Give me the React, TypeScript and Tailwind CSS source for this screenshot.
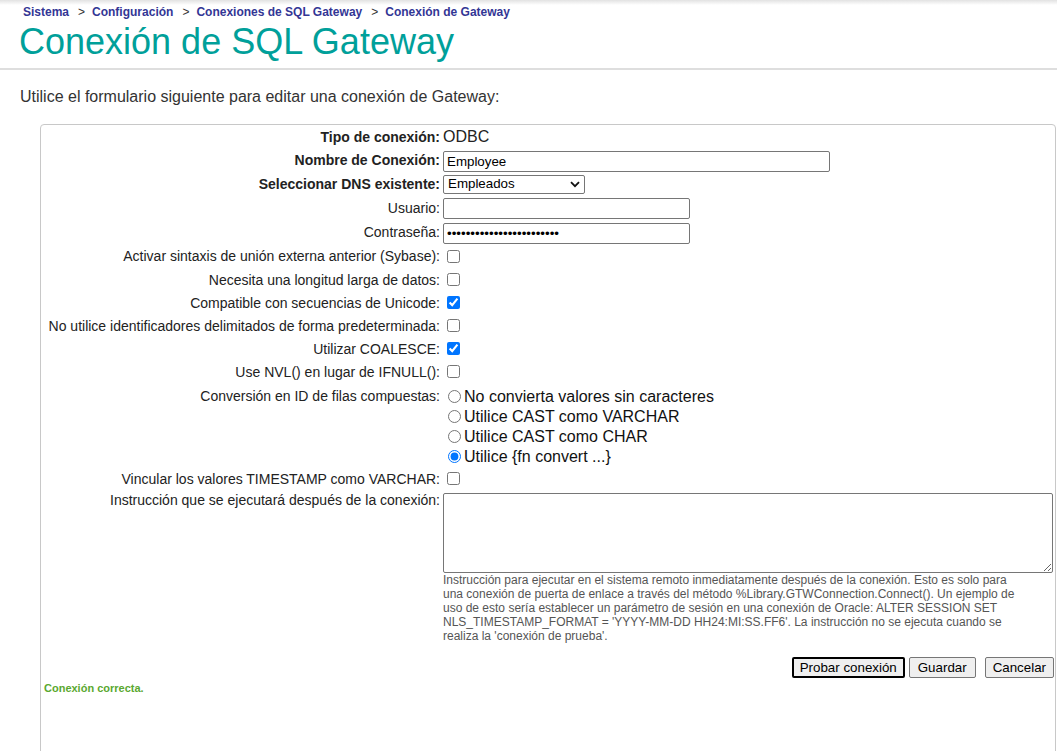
import React from "react";

const FONT = { fontFamily: '"Liberation Sans", Arial, sans-serif' };

function Row({
  label,
  bold,
  h,
  children,
  top,
  labelClass,
}: {
  label: string;
  bold?: boolean;
  h?: string;
  children: React.ReactNode;
  top?: boolean;
  labelClass?: string;
}) {
  return (
    <div className={`flex ${top ? "items-start" : "items-center"} ${h ?? ""}`}>
      <div
        className={`w-[399px] shrink-0 text-right text-[14px] leading-4 text-[#222] ${
          bold ? "font-bold" : ""
        } ${labelClass ?? ""}`}
      >
        {label}
      </div>
      <div className="pl-[3px] flex items-center">{children}</div>
    </div>
  );
}

function Check({ checked }: { checked?: boolean }) {
  return (
    <input
      type="checkbox"
      defaultChecked={checked}
      className="w-[13px] h-[13px] ml-[4px] my-0"
    />
  );
}

function Radio({ label, checked }: { label: string; checked?: boolean }) {
  return (
    <label className="flex items-center h-5 pt-[1px] text-[16px] text-[#111]">
      <input
        type="radio"
        name="conv"
        defaultChecked={checked}
        className="w-[13px] h-[13px] ml-[5px] mr-[3px] my-0"
      />
      <span>{label}</span>
    </label>
  );
}

const inputCls =
  "block h-[21px] border border-[#767676] rounded-[2px] px-[3px] text-[13.33px] text-black bg-white";

export default function App() {
  return (
    <div className="h-[751px] w-[1057px] overflow-hidden bg-white" style={FONT}>
      {/* header */}
      <div className="h-[5px] bg-gradient-to-b from-[#e2e2e2] to-white" />
      <div className="pl-[23px] h-[14px] flex items-center text-[12px] leading-[14px]">
        <span className="font-bold text-[#333695]">Sistema</span>
        <span className="ml-[9px] mr-[7px] text-[#333]">&gt;</span>
        <span className="font-bold text-[#333695]">Configuración</span>
        <span className="ml-[9px] mr-[7px] text-[#333]">&gt;</span>
        <span className="font-bold text-[#333695]">Conexiones de SQL Gateway</span>
        <span className="ml-[9px] mr-[7px] text-[#333]">&gt;</span>
        <span className="font-bold text-[#333695]">Conexión de Gateway</span>
      </div>
      <div className="pl-[19px] h-[49px] pt-[2px] text-[36px] leading-[41px] text-[#00a09a]">
        Conexión de SQL Gateway
      </div>
      <div className="h-[2px] bg-[#dedede]" />

      <div className="pl-5 mt-[18px] h-[18px] text-[16px] leading-[18px] text-[#333]">
        Utilice el formulario siguiente para editar una conexión de Gateway:
      </div>

      {/* card */}
      <div className="ml-10 mr-[1px] mt-[18px] min-h-[700px] border border-[#c8c8c8] rounded-[4px] pt-[1px] pr-[1px]">
        <Row label="Tipo de conexión:" bold h="h-[22px]">
          <span className="text-[16px] text-[#222]">ODBC</span>
        </Row>
        <Row label="Nombre de Conexión:" bold h="h-6">
          <input className={`${inputCls} w-[387px] mt-[2px]`} defaultValue="Employee" />
        </Row>
        <Row label="Seleccionar DNS existente:" bold h="h-6">
          <div className="flex items-center justify-between w-[142px] h-[19px] border border-[#767676] rounded-[2px] pl-[4px] pr-[4px] bg-white text-[13.33px] text-black">
            <span>Empleados</span>
            <svg width="10" height="7" viewBox="0 0 10 7">
              <path
                d="M1 1.2 L5 5.2 L9 1.2"
                fill="none"
                stroke="#111"
                strokeWidth="1.8"
              />
            </svg>
          </div>
        </Row>
        <Row label="Usuario:" h="h-6">
          <input className={`${inputCls} w-[247px] mt-[1px]`} defaultValue="" />
        </Row>
        <Row label="Contraseña:" h="h-6">
          <input
            type="password"
            className={`${inputCls} w-[247px] mt-[2px]`}
            defaultValue="abcdefghijklmnopqrstuvwx"
          />
        </Row>
        <Row label="Activar sintaxis de unión externa anterior (Sybase):" h="h-6">
          <Check />
        </Row>
        <Row label="Necesita una longitud larga de datos:" h="h-[23px]">
          <Check />
        </Row>
        <Row label="Compatible con secuencias de Unicode:" h="h-[23px]">
          <Check checked />
        </Row>
        <Row
          label="No utilice identificadores delimitados de forma predeterminada:"
          h="h-[23px]"
        >
          <Check />
        </Row>
        <Row label="Utilizar COALESCE:" h="h-[23px]">
          <Check checked />
        </Row>
        <Row label="Use NVL() en lugar de IFNULL():" h="h-[23px]">
          <Check />
        </Row>
        <div className="flex items-start h-[84px] pt-[3px]">
          <div className="w-[399px] shrink-0 text-right text-[14px] leading-4 text-[#222] pt-[2px]">
            Conversión en ID de filas compuestas:
          </div>
          <div className="pl-[3px] flex flex-col">
            <Radio label="No convierta valores sin caracteres" />
            <Radio label="Utilice CAST como VARCHAR" />
            <Radio label="Utilice CAST como CHAR" />
            <Radio label="Utilice {fn convert ...}" checked />
          </div>
        </div>
        <Row label="Vincular los valores TIMESTAMP como VARCHAR:" h="h-[23px]">
          <Check />
        </Row>
        <div className="flex items-start">
          <div className="w-[399px] shrink-0 text-right text-[14px] leading-4 text-[#222] pt-[2px]">
            Instrucción que se ejecutará después de la conexión:
          </div>
          <div className="pl-[3px] pt-[3px] flex flex-col">
            <textarea className="block w-[610px] h-[80px] border border-[#767676] rounded-[2px] bg-white text-[13.33px]" />
            <div className="text-[12px] leading-[14px] text-[#555]">
              <div className="whitespace-nowrap">
                Instrucción para ejecutar en el sistema remoto inmediatamente después de la conexión. Esto es solo para
              </div>
              <div className="whitespace-nowrap">
                una conexión de puerta de enlace a través del método %Library.GTWConnection.Connect(). Un ejemplo de
              </div>
              <div className="whitespace-nowrap">
                uso de esto sería establecer un parámetro de sesión en una conexión de Oracle: ALTER SESSION SET
              </div>
              <div className="whitespace-nowrap">
                NLS_TIMESTAMP_FORMAT = 'YYYY-MM-DD HH24:MI:SS.FF6'. La instrucción no se ejecuta cuando se
              </div>
              <div className="whitespace-nowrap">realiza la 'conexión de prueba'.</div>
            </div>
          </div>
        </div>
        <div className="flex justify-end items-center mt-[14px]">
          <button className="h-[21px] px-[6px] border-2 border-black rounded-[2px] bg-[#efefef] text-[13.33px] text-black leading-none">
            Probar conexión
          </button>
          <button className="ml-[4px] h-[21px] px-[8px] border border-[#767676] rounded-[2px] bg-[#efefef] text-[13.33px] text-black leading-none">
            Guardar
          </button>
          <button className="ml-[9px] h-[21px] px-[7px] border border-[#767676] rounded-[2px] bg-[#efefef] text-[13.33px] text-black leading-none">
            Cancelar
          </button>
        </div>
        <div className="pl-[3px] mt-[4px] text-[11px] leading-[13px] font-bold text-[#5aa830]">
          Conexión correcta.
        </div>
      </div>
    </div>
  );
}
